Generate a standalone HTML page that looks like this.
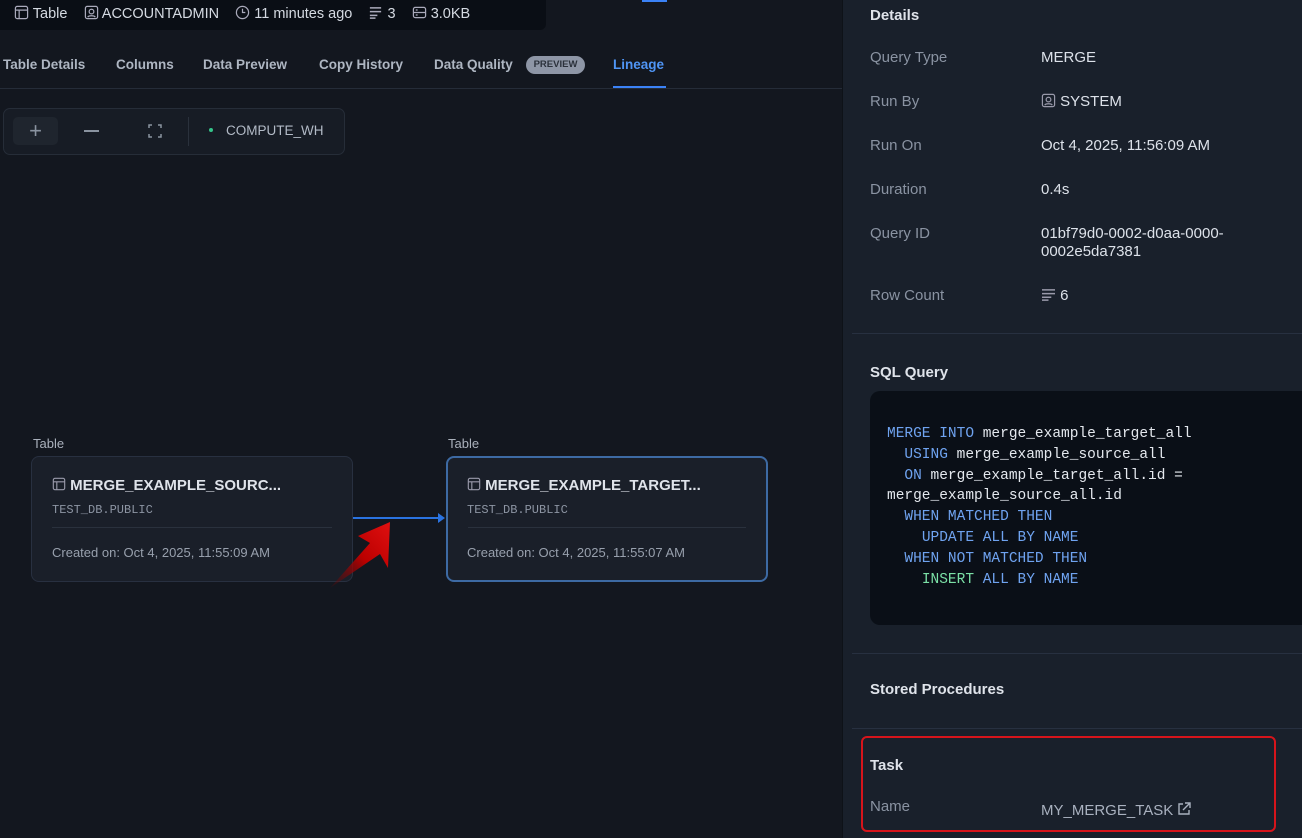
<!DOCTYPE html>
<html><head><meta charset="utf-8"><style>
*{margin:0;padding:0;box-sizing:border-box}
body{width:1302px;height:838px;overflow:hidden;background:#13171f;font-family:"Liberation Sans",sans-serif;position:relative;color:#c8ced8}
.a{position:absolute;white-space:nowrap}
.tab{position:absolute;top:57px;font-size:13.5px;font-weight:bold;color:#aeb6c2}
.card{position:absolute;top:456px;width:322px;height:126px;border:1px solid #283040;border-radius:8px;background:#1a1f29}
.card .t{position:absolute;left:20px;top:20px;font-size:15px;font-weight:bold;color:#dfe3ea}
.card .s{position:absolute;left:20px;top:46px;font-family:"Liberation Mono",monospace;font-size:12px;color:#8d95a3}
.card .l{position:absolute;left:20px;right:20px;top:70px;border-top:1px solid #2a313d}
.card .c{position:absolute;left:20px;top:88px;font-size:13px;color:#98a0ad}
.rp{position:absolute;left:842px;top:0;width:460px;height:838px;background:#19202b;border-left:1px solid #0e1218;overflow:hidden}
.lb{position:absolute;left:27px;font-size:15px;color:#8a93a2}
.vl{position:absolute;left:198px;font-size:15px;color:#dde2ea}
.h{position:absolute;left:27px;font-size:15px;font-weight:bold;color:#dfe3ea}
.dv{position:absolute;left:9px;right:0;border-top:1px solid #273040}
pre{font-family:"Liberation Mono",monospace;font-size:14.5px;line-height:20.8px;color:#e4e8ee;white-space:pre!important}
.k{color:#6fa3f0}.g{color:#7be0a6}
</style></head><body>
<div class="a" style="left:0;top:0;width:546px;height:30px;background:#0a0e15;border-radius:0 0 6px 0"></div>
<div class="a" style="left:14px;top:5px;font-size:14.5px;color:#d5dae2">
<svg width="15" height="15" viewBox="0 0 16 16" style="vertical-align:-2px"><rect x="1.5" y="1.5" width="13" height="13" rx="2" fill="none" stroke="#aab" stroke-width="1.3"/><path d="M1.5 5.5h13M5.5 5.5v9" stroke="#aab" stroke-width="1.3"/></svg> Table&nbsp;&nbsp;&nbsp;
<svg width="15" height="15" viewBox="0 0 16 16" style="vertical-align:-2px"><rect x="1.5" y="1.5" width="13" height="13" rx="2" fill="none" stroke="#aab" stroke-width="1.3"/><circle cx="8" cy="7" r="2.5" fill="none" stroke="#aab" stroke-width="1.3"/><path d="M4 13c1-2 7-2 8 0" stroke="#aab" fill="none" stroke-width="1.3"/></svg> ACCOUNTADMIN&nbsp;&nbsp;&nbsp;
<svg width="15" height="15" viewBox="0 0 16 16" style="vertical-align:-2px"><circle cx="8" cy="8" r="6.5" fill="none" stroke="#aab" stroke-width="1.3"/><path d="M8 4v4h3" stroke="#aab" fill="none" stroke-width="1.3"/></svg> 11 minutes ago&nbsp;&nbsp;&nbsp;
<svg width="15" height="15" viewBox="0 0 16 16" style="vertical-align:-2px"><path d="M2 3h12M2 7h12M2 11h8M2 14h6" stroke="#aab" stroke-width="1.6"/></svg> 3&nbsp;&nbsp;&nbsp;
<svg width="15" height="15" viewBox="0 0 16 16" style="vertical-align:-2px"><rect x="1.5" y="2.5" width="13" height="11" rx="2" fill="none" stroke="#aab" stroke-width="1.3"/><path d="M1.5 8h13M4 5.3h2M4 10.7h2" stroke="#aab" stroke-width="1.3"/></svg> 3.0KB</div>
<div class="a" style="left:642px;top:0;width:25px;height:2px;background:#3b82f6"></div>
<div class="tab" style="left:3px">Table Details</div>
<div class="tab" style="left:116px">Columns</div>
<div class="tab" style="left:203px">Data Preview</div>
<div class="tab" style="left:319px">Copy History</div>
<div class="tab" style="left:434px">Data Quality</div>
<div class="a" style="left:526px;top:56px;width:59px;height:18px;border-radius:9px;background:#8e96a6;color:#2b313b;font-size:9.5px;text-align:center;line-height:18px;font-weight:bold">PREVIEW</div>
<div class="tab" style="left:613px;color:#4f95f5">Lineage</div>
<div class="a" style="left:0;top:88px;width:842px;border-top:1px solid #252c38"></div>
<div class="a" style="left:613px;top:86px;width:53px;height:2px;background:#3b82f6"></div>
<div class="a" style="left:3px;top:108px;width:342px;height:47px;border:1px solid #262d38;border-radius:7px;background:#171c25"></div>
<div class="a" style="left:13px;top:117px;width:45px;height:28px;border-radius:5px;background:#1f252e;color:#8a93a0;font-size:22px;text-align:center;line-height:27px">+</div>
<div class="a" style="left:84px;top:130px;width:15px;height:2px;background:#8a93a0"></div>
<svg class="a" style="left:148px;top:124px" width="14" height="14" viewBox="0 0 14 14"><path d="M1 4V1h3M10 1h3v3M13 10v3h-3M4 13H1v-3" stroke="#8a93a0" fill="none" stroke-width="1.5"/></svg>
<div class="a" style="left:188px;top:117px;height:29px;border-left:1px solid #2a313c"></div>
<div class="a" style="left:209px;top:128px;width:4px;height:4px;border-radius:50%;background:#35c48a"></div>
<div class="a" style="left:226px;top:123px;font-size:13.5px;color:#b2bac6">COMPUTE_WH</div>
<div class="a" style="left:33px;top:436px;font-size:13px;color:#aab1bc">Table</div>
<div class="a" style="left:448px;top:436px;font-size:13px;color:#aab1bc">Table</div>
<div class="card" style="left:31px"><div class="t"><svg width="14" height="14" viewBox="0 0 16 16" style="vertical-align:-1px"><rect x="1.5" y="1.5" width="13" height="13" rx="2" fill="none" stroke="#99a" stroke-width="1.3"/><path d="M1.5 5.5h13M5.5 5.5v9" stroke="#99a" stroke-width="1.3"/></svg> MERGE_EXAMPLE_SOURC...</div><div class="s">TEST_DB.PUBLIC</div><div class="l"></div><div class="c">Created on: Oct 4, 2025, 11:55:09 AM</div></div>
<div class="card" style="left:446px;border:2px solid #3d6aa3"><div class="t" style="left:19px;top:19px"><svg width="14" height="14" viewBox="0 0 16 16" style="vertical-align:-1px"><rect x="1.5" y="1.5" width="13" height="13" rx="2" fill="none" stroke="#99a" stroke-width="1.3"/><path d="M1.5 5.5h13M5.5 5.5v9" stroke="#99a" stroke-width="1.3"/></svg> MERGE_EXAMPLE_TARGET...</div><div class="s" style="left:19px;top:45px">TEST_DB.PUBLIC</div><div class="l" style="top:69px"></div><div class="c" style="left:19px;top:87px">Created on: Oct 4, 2025, 11:55:07 AM</div></div>
<svg class="a" style="left:330px;top:505px" width="120" height="90" viewBox="0 0 120 90"><path d="M23 13H110" stroke="#2a73e0" stroke-width="2"/><path d="M108 8l7 5-7 5z" fill="#2a73e0"/><defs><linearGradient id="r" x1="0" y1="1" x2="1" y2="0"><stop offset="0" stop-color="#5a0a0a" stop-opacity=".2"/><stop offset=".5" stop-color="#b00"/><stop offset="1" stop-color="#e01010"/></linearGradient></defs><path d="M0 83L40 38L28 31L60 17L58 63L50 49Z" fill="url(#r)"/></svg>
<div class="rp">
<div class="h" style="top:7px">Details</div>
<div class="lb" style="top:49px">Query Type</div><div class="vl" style="top:49px">MERGE</div>
<div class="lb" style="top:93px">Run By</div><div class="vl" style="top:93px"><svg width="15" height="15" viewBox="0 0 16 16" style="vertical-align:-2px"><rect x="1.5" y="1.5" width="13" height="13" rx="2" fill="none" stroke="#99a" stroke-width="1.3"/><circle cx="8" cy="7" r="2.5" fill="none" stroke="#99a" stroke-width="1.3"/><path d="M4 13c1-2 7-2 8 0" stroke="#99a" fill="none" stroke-width="1.3"/></svg> SYSTEM</div>
<div class="lb" style="top:137px">Run On</div><div class="vl" style="top:137px">Oct 4, 2025, 11:56:09 AM</div>
<div class="lb" style="top:181px">Duration</div><div class="vl" style="top:181px">0.4s</div>
<div class="lb" style="top:225px">Query ID</div><div class="vl" style="top:225px;line-height:18px">01bf79d0-0002-d0aa-0000-<br>0002e5da7381</div>
<div class="lb" style="top:287px">Row Count</div><div class="vl" style="top:287px"><svg width="15" height="13" viewBox="0 0 16 14" style="vertical-align:-1px"><path d="M1 2h14M1 6h14M1 10h10M1 13h7" stroke="#99a" stroke-width="1.6"/></svg> 6</div>
<div class="dv" style="top:333px"></div>
<div class="h" style="top:364px">SQL Query</div>
<div class="a" style="left:27px;top:391px;width:433px;height:234px;background:#0a0f17;border-radius:10px 0 0 10px"></div>
<pre class="a" style="left:44px;top:424px"><span class="k">MERGE INTO</span> merge_example_target_all
  <span class="k">USING</span> merge_example_source_all
  <span class="k">ON</span> merge_example_target_all.id =
merge_example_source_all.id
  <span class="k">WHEN MATCHED THEN</span>
    <span class="k">UPDATE ALL BY NAME</span>
  <span class="k">WHEN NOT MATCHED THEN</span>
    <span class="g">INSERT</span> <span class="k">ALL BY NAME</span></pre>
<div class="dv" style="top:653px"></div>
<div class="h" style="top:681px">Stored Procedures</div>
<div class="dv" style="top:728px"></div>
<div class="a" style="left:18px;top:736px;width:415px;height:96px;border:2px solid #d6141b;border-radius:6px"></div>
<div class="h" style="top:757px">Task</div>
<div class="lb" style="top:798px">Name</div><div class="vl" style="top:802px;color:#a9b1bf">MY_MERGE_TASK <svg width="14" height="14" viewBox="0 0 14 14" style="vertical-align:-1px"><path d="M6 2H2v10h10V8M8 1h5v5M13 1L6 8" stroke="#a9b1bf" fill="none" stroke-width="1.4"/></svg></div>
</div>
</body></html>
